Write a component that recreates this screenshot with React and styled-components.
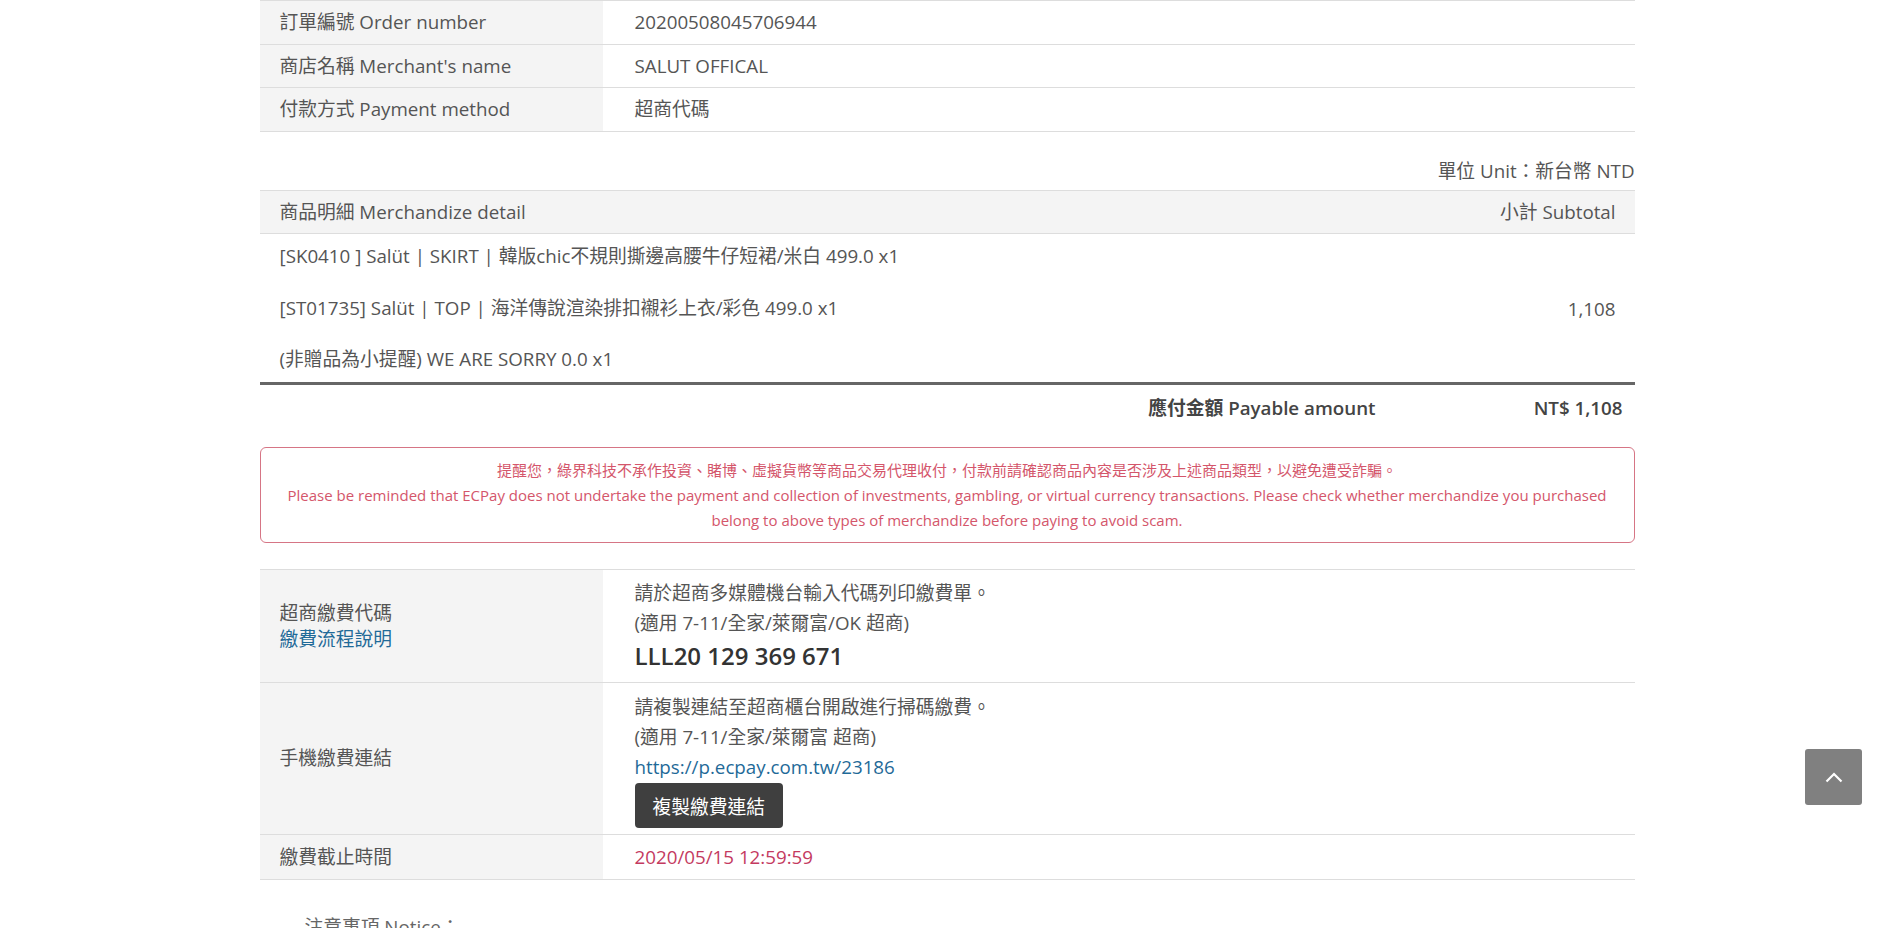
import React from 'react'
import styled, { createGlobalStyle } from 'styled-components'

const GlobalStyle = createGlobalStyle`
  html, body {
    margin: 0;
    padding: 0;
    background: #fff;
    overflow: hidden;
  }
  body {
    font-family: "Open Sans", "Noto Sans CJK TC", sans-serif;
    font-size: 18.75px;
    color: #555;
  }
`

const items = [
  '[SK0410 ] Salüt | SKIRT | 韓版chic不規則撕邊高腰牛仔短裙/米白 499.0 x1',
  '[ST01735] Salüt | TOP | 海洋傳說渲染排扣襯衫上衣/彩色 499.0 x1',
  '(非贈品為小提醒) WE ARE SORRY 0.0 x1'
]

const orderInfo = [
  { label: '訂單編號 Order number', value: '20200508045706944' },
  { label: "商店名稱 Merchant's name", value: 'SALUT OFFICAL' },
  { label: '付款方式 Payment method', value: '超商代碼' }
]

const Page = styled.div`
  width: 1375px;
  margin: 0 auto;
`

const InfoTable = styled.div`
  display: grid;
  grid-template-columns: 343px 1fr;
  border-top: 1px solid #ddd;
`

const LabelCell = styled.div`
  background: #f4f4f4;
  border-bottom: 1px solid #ddd;
  padding: ${p => p.$pad || '8px'} 20px;
  line-height: ${p => p.$lh || '26.5px'};
  display: flex;
  flex-direction: column;
  justify-content: center;
`

const ValueCell = styled.div`
  border-bottom: 1px solid #ddd;
  padding: ${p => p.$pad || '8px'} 32px;
  line-height: ${p => p.$lh || '26.5px'};
  color: ${p => p.$tone || '#555'};
`

const UnitNote = styled.div`
  text-align: right;
  line-height: 27px;
  margin: 25px 0 6px;
`

const DetailHead = styled.div`
  display: flex;
  justify-content: space-between;
  background: #f4f4f4;
  border-top: 1px solid #ddd;
  border-bottom: 1px solid #ddd;
  padding: 8px 19px 8px 20px;
  line-height: 26.5px;
`

const DetailBody = styled.div`
  display: grid;
  grid-template-columns: 1fr auto;
  border-bottom: 3px solid #666;
`

const ItemList = styled.div`
  display: flex;
  flex-direction: column;
  gap: 24.5px;
  padding: 8px 20px 10px;
  line-height: 27px;
`

const Subtotal = styled.div`
  align-self: center;
  padding-right: 19px;
`

const PayableRow = styled.div`
  display: flex;
  justify-content: flex-end;
  padding: 8.5px 0;
  line-height: 27px;
  font-weight: 600;
  color: #444;
`

const PayableAmount = styled.div`
  width: 259px;
  text-align: right;
  padding-right: 12px;
  box-sizing: border-box;
`

const Warning = styled.div`
  margin-top: 18px;
  border: 1px solid #d67585;
  border-radius: 6px;
  padding: 10px 16px 9px;
  text-align: center;
  color: #d4566b;
  font-size: 15px;
  line-height: 25px;
`

const PayTable = styled(InfoTable)`
  margin-top: 26px;
`

const LinkText = styled.a`
  color: #1f6a98;
  text-decoration: none;
`

const Code = styled.div`
  font-size: 24px;
  line-height: 36px;
  font-weight: 600;
  color: #333;
`

const CopyButton = styled.button`
  display: block;
  margin-top: 1px;
  height: 45px;
  padding: 0 18px;
  background: #3f3f3f;
  color: #fff;
  border: none;
  border-radius: 4px;
  font-family: inherit;
  font-size: 18.75px;
`

const Notice = styled.div`
  margin-top: 33px;
  padding-left: 45px;
  line-height: 27px;
  color: #666;
`

const BackTop = styled.button`
  position: fixed;
  top: 749px;
  right: 32px;
  width: 57px;
  height: 56px;
  background: #808080;
  border: none;
  border-radius: 3px;
  display: flex;
  align-items: center;
  justify-content: center;
  padding: 0;
`

export default function App() {
  return (
    <>
      <GlobalStyle />
      <Page>
        <InfoTable>
          {orderInfo.map(row => (
            <React.Fragment key={row.label}>
              <LabelCell>{row.label}</LabelCell>
              <ValueCell>{row.value}</ValueCell>
            </React.Fragment>
          ))}
        </InfoTable>

        <UnitNote>單位 Unit：新台幣 NTD</UnitNote>
        <DetailHead>
          <span>商品明細 Merchandize detail</span>
          <span>小計 Subtotal</span>
        </DetailHead>
        <DetailBody>
          <ItemList>
            {items.map(it => <div key={it}>{it}</div>)}
          </ItemList>
          <Subtotal>1,108</Subtotal>
        </DetailBody>
        <PayableRow>
          <div>應付金額 Payable amount</div>
          <PayableAmount>NT$ 1,108</PayableAmount>
        </PayableRow>

        <Warning>
          <div>提醒您，綠界科技不承作投資、賭博、虛擬貨幣等商品交易代理收付，付款前請確認商品內容是否涉及上述商品類型，以避免遭受詐騙。</div>
          <div>Please be reminded that ECPay does not undertake the payment and collection of investments, gambling, or virtual currency transactions. Please check whether merchandize you purchased belong to above types of merchandize before paying to avoid scam.</div>
        </Warning>

        <PayTable>
          <LabelCell $lh="26px">
            <div>超商繳費代碼</div>
            <LinkText href="#">繳費流程說明</LinkText>
          </LabelCell>
          <ValueCell $lh="30px" $pad="8px">
            <div>請於超商多媒體機台輸入代碼列印繳費單。</div>
            <div>(適用 7-11/全家/萊爾富/OK 超商)</div>
            <Code>LLL20 129 369 671</Code>
          </ValueCell>

          <LabelCell>手機繳費連結</LabelCell>
          <ValueCell $lh="30px" $pad="9px 32px 6px">
            <div>請複製連結至超商櫃台開啟進行掃碼繳費。</div>
            <div>(適用 7-11/全家/萊爾富 超商)</div>
            <div><LinkText href="#">https://p.ecpay.com.tw/23186</LinkText></div>
            <CopyButton>複製繳費連結</CopyButton>
          </ValueCell>

          <LabelCell $lh="28px">繳費截止時間</LabelCell>
          <ValueCell $lh="28px" $tone="#c43a5f">2020/05/15 12:59:59</ValueCell>
        </PayTable>

        <Notice>注意事項 Notice：</Notice>
      </Page>
      <BackTop aria-label="top">
        <svg width="18" height="11" viewBox="0 0 18 11" fill="none">
          <polyline points="1.5,9.5 9,2 16.5,9.5" stroke="#fff" strokeWidth="2.2" />
        </svg>
      </BackTop>
    </>
  )
}
